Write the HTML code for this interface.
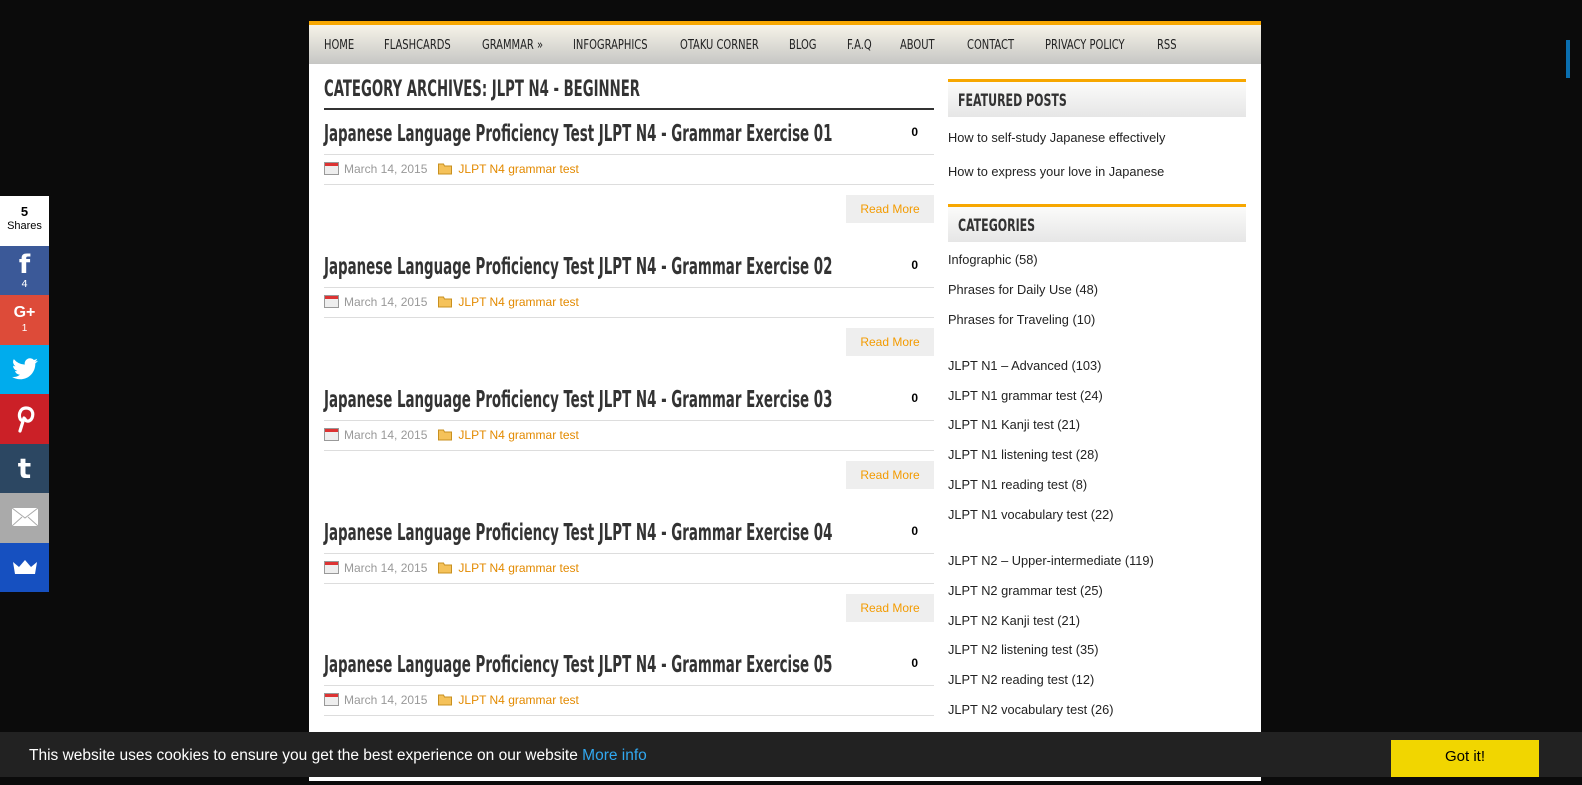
<!DOCTYPE html>
<html><head><meta charset="utf-8"><style>
*{margin:0;padding:0;box-sizing:border-box}
body{width:1582px;height:777px;overflow:hidden;background:#0b0b0b;font-family:"Liberation Sans",Arial,sans-serif;position:relative}
.cond{font-family:"DejaVu Sans Condensed","Liberation Sans Narrow","Liberation Sans",sans-serif;font-weight:bold}
#wrap{position:absolute;left:309px;top:21px;width:952px;height:760px;background:#fff}
#nav{height:43px;border-top:4px solid #f7a700;background:linear-gradient(#f6f3e8,#c6c6c4);position:relative}
#nav span{position:absolute;top:13px;font-size:13px;color:#222;transform:scaleX(.85);transform-origin:left;white-space:nowrap;font-weight:normal}
.h1{position:absolute;left:15px;top:56px;font-size:22px;color:#333;transform:scaleX(.67);transform-origin:left;white-space:nowrap}
.hr{position:absolute;left:15px;width:610px;height:2px;background:#333;top:87px}
.post{position:absolute;left:15px;width:610px;height:133px}
.post .t{position:absolute;left:0;top:0;font-size:23px;color:#333;white-space:nowrap;transform:scaleX(.647);transform-origin:left}
.post .c{position:absolute;right:16px;top:4px;font-size:12px;font-weight:bold}
.post .l1{position:absolute;left:0;right:0;top:33px;height:1px;background:#ddd}
.post .m{position:absolute;left:0;top:41px;font-size:12px;color:#999}
.post .m b{font-weight:normal;color:#e38a00}
.post .l2{position:absolute;left:0;right:0;top:63px;height:1px;background:#ddd}
.post .rm{position:absolute;right:0;top:74px;width:88px;height:28px;background:#eee;color:#f39b00;font-size:12px;text-align:center;line-height:28px}
.ic{display:inline-block;width:15px;height:13px;vertical-align:-2px;margin-right:5px}
.sh{position:absolute;left:639px;width:298px;height:38px;border-top:3px solid #f7a700;background:linear-gradient(#fbfbfa,#e6e6e6);font-size:17px;color:#333;padding:9px 10px}
.sh span{display:inline-block;transform:scaleX(.72);transform-origin:left;white-space:nowrap}
.sl{position:absolute;left:639px;font-size:12.8px;color:#222}
#soc{position:absolute;left:0;top:196px;width:49px}
#soc div{height:49.5px;color:#fff;text-align:center;font-weight:bold}
#cookie{position:absolute;left:0;top:732px;width:1582px;height:45px;background:#222;color:#fff;font-size:15.5px}
</style></head><body>
<div style="position:absolute;left:1566px;top:40px;width:4px;height:38px;background:#0a6fb0"></div>
<div id="wrap">
<div id="nav" class="cond">
<span style="left:15px">HOME</span><span style="left:75px">FLASHCARDS</span><span style="left:173px">GRAMMAR »</span><span style="left:264px">INFOGRAPHICS</span><span style="left:371px">OTAKU CORNER</span><span style="left:480px">BLOG</span><span style="left:538px">F.A.Q</span><span style="left:591px">ABOUT</span><span style="left:658px">CONTACT</span><span style="left:736px">PRIVACY POLICY</span><span style="left:848px">RSS</span>
</div>
<div class="h1 cond">CATEGORY ARCHIVES: JLPT N4 - BEGINNER</div>
<div class="hr"></div>
<div class="post" style="top:100px"><div class="t cond">Japanese Language Proficiency Test JLPT N4 - Grammar Exercise 01</div><div class="c">0</div><div class="l1"></div><div class="m"><svg class="ic" viewBox="0 0 15 13"><rect x=".5" y=".5" width="14" height="12" fill="#eee" stroke="#999"/><rect x="1" y="1" width="13" height="3" fill="#d33"/></svg>March 14, 2015 &nbsp;&nbsp;<svg class="ic" viewBox="0 0 15 13" style="width:16px"><path d="M1 2h5l1 2h7v8H1z" fill="#f5c25a" stroke="#c89020"/></svg><b>JLPT N4 grammar test</b></div><div class="l2"></div><div class="rm">Read More</div></div>
<div class="post" style="top:233px"><div class="t cond">Japanese Language Proficiency Test JLPT N4 - Grammar Exercise 02</div><div class="c">0</div><div class="l1"></div><div class="m"><svg class="ic" viewBox="0 0 15 13"><rect x=".5" y=".5" width="14" height="12" fill="#eee" stroke="#999"/><rect x="1" y="1" width="13" height="3" fill="#d33"/></svg>March 14, 2015 &nbsp;&nbsp;<svg class="ic" viewBox="0 0 15 13" style="width:16px"><path d="M1 2h5l1 2h7v8H1z" fill="#f5c25a" stroke="#c89020"/></svg><b>JLPT N4 grammar test</b></div><div class="l2"></div><div class="rm">Read More</div></div>
<div class="post" style="top:366px"><div class="t cond">Japanese Language Proficiency Test JLPT N4 - Grammar Exercise 03</div><div class="c">0</div><div class="l1"></div><div class="m"><svg class="ic" viewBox="0 0 15 13"><rect x=".5" y=".5" width="14" height="12" fill="#eee" stroke="#999"/><rect x="1" y="1" width="13" height="3" fill="#d33"/></svg>March 14, 2015 &nbsp;&nbsp;<svg class="ic" viewBox="0 0 15 13" style="width:16px"><path d="M1 2h5l1 2h7v8H1z" fill="#f5c25a" stroke="#c89020"/></svg><b>JLPT N4 grammar test</b></div><div class="l2"></div><div class="rm">Read More</div></div>
<div class="post" style="top:499px"><div class="t cond">Japanese Language Proficiency Test JLPT N4 - Grammar Exercise 04</div><div class="c">0</div><div class="l1"></div><div class="m"><svg class="ic" viewBox="0 0 15 13"><rect x=".5" y=".5" width="14" height="12" fill="#eee" stroke="#999"/><rect x="1" y="1" width="13" height="3" fill="#d33"/></svg>March 14, 2015 &nbsp;&nbsp;<svg class="ic" viewBox="0 0 15 13" style="width:16px"><path d="M1 2h5l1 2h7v8H1z" fill="#f5c25a" stroke="#c89020"/></svg><b>JLPT N4 grammar test</b></div><div class="l2"></div><div class="rm">Read More</div></div>
<div class="post" style="top:631px"><div class="t cond">Japanese Language Proficiency Test JLPT N4 - Grammar Exercise 05</div><div class="c">0</div><div class="l1"></div><div class="m"><svg class="ic" viewBox="0 0 15 13"><rect x=".5" y=".5" width="14" height="12" fill="#eee" stroke="#999"/><rect x="1" y="1" width="13" height="3" fill="#d33"/></svg>March 14, 2015 &nbsp;&nbsp;<svg class="ic" viewBox="0 0 15 13" style="width:16px"><path d="M1 2h5l1 2h7v8H1z" fill="#f5c25a" stroke="#c89020"/></svg><b>JLPT N4 grammar test</b></div><div class="l2"></div></div>
<div class="sh cond" style="top:58px"><span>FEATURED POSTS</span></div>
<div class="sl" style="top:109px">How to self-study Japanese effectively</div>
<div class="sl" style="top:143px">How to express your love in Japanese</div>
<div class="sh cond" style="top:183px"><span>CATEGORIES</span></div>
<div class="sl" style="top:231px">Infographic (58)</div>
<div class="sl" style="top:261px">Phrases for Daily Use (48)</div>
<div class="sl" style="top:291px">Phrases for Traveling (10)</div>
<div class="sl" style="top:337px">JLPT N1 – Advanced (103)</div>
<div class="sl" style="top:367px">JLPT N1 grammar test (24)</div>
<div class="sl" style="top:396px">JLPT N1 Kanji test (21)</div>
<div class="sl" style="top:426px">JLPT N1 listening test (28)</div>
<div class="sl" style="top:456px">JLPT N1 reading test (8)</div>
<div class="sl" style="top:486px">JLPT N1 vocabulary test (22)</div>
<div class="sl" style="top:532px">JLPT N2 – Upper-intermediate (119)</div>
<div class="sl" style="top:562px">JLPT N2 grammar test (25)</div>
<div class="sl" style="top:592px">JLPT N2 Kanji test (21)</div>
<div class="sl" style="top:621px">JLPT N2 listening test (35)</div>
<div class="sl" style="top:651px">JLPT N2 reading test (12)</div>
<div class="sl" style="top:681px">JLPT N2 vocabulary test (26)</div>
</div>
<div id="soc">
<div style="background:#fff;color:#000;padding-top:9px;font-size:13px;line-height:13px">5<br><span style="font-weight:normal;font-size:11px">Shares</span></div>
<div style="background:#3b5998;font-size:26px;line-height:30px;padding-top:4px;font-family:'DejaVu Sans',sans-serif">f<div style="height:auto;font-size:10px;line-height:10px;font-weight:normal">4</div></div>
<div style="background:#dd4b39;font-size:16px;padding-top:9px;line-height:18px">G+<div style="height:auto;font-size:10px;font-weight:normal;line-height:14px">1</div></div>
<div style="background:#00aced;padding-top:13px"><svg width="26" height="22" viewBox="0 0 24 20"><path fill="#fff" d="M24 2.4a10 10 0 0 1-2.8.8A5 5 0 0 0 23.3.5a10 10 0 0 1-3.1 1.2A4.9 4.9 0 0 0 11.8 6 14 14 0 0 1 1.7.9a4.9 4.9 0 0 0 1.5 6.6A4.9 4.9 0 0 1 1 6.9a4.9 4.9 0 0 0 3.9 4.9 4.9 4.9 0 0 1-2.2.1 4.9 4.9 0 0 0 4.6 3.4A9.9 9.9 0 0 1 0 17.3 14 14 0 0 0 7.5 19.5c9 0 14-7.5 14-14v-.6A10 10 0 0 0 24 2.4z"/></svg></div>
<div style="background:#cb2027;padding-top:11px"><svg width="20" height="28" viewBox="0 0 20 28"><path d="M5 26L9 13M6 15C3 12 4 3 11 3c6 0 8 5 6 10-2 4-6 4-7 1" stroke="#fff" stroke-width="3.2" fill="none" stroke-linecap="round"/></svg></div>
<div style="background:#2c4762;font-size:28px;line-height:49px;font-family:'DejaVu Sans',sans-serif">t</div>
<div style="background:#aaa;padding-top:15px"><svg width="26" height="18" viewBox="0 0 26 18"><rect width="26" height="18" fill="#fff"/><path d="M0 0l13 10L26 0M0 18l10-9M26 18l-10-9" stroke="#aaa" fill="none"/></svg></div>
<div style="background:#1650c0;padding-top:17px"><svg width="24" height="14" viewBox="0 0 24 14"><path fill="#fff" d="M0 2l6 5 6-7 6 7 6-5-2 12H2z"/></svg></div>
</div>
<div id="cookie"><span style="position:absolute;left:29px;top:15px">This website uses cookies to ensure you get the best experience on our website <span style="color:#31a8f0">More info</span></span>
<div style="position:absolute;left:1391px;top:8px;width:148px;height:37px;background:#f1d600;color:#000;text-align:center;line-height:33px;font-size:15px">Got it!</div></div>
</body></html>
